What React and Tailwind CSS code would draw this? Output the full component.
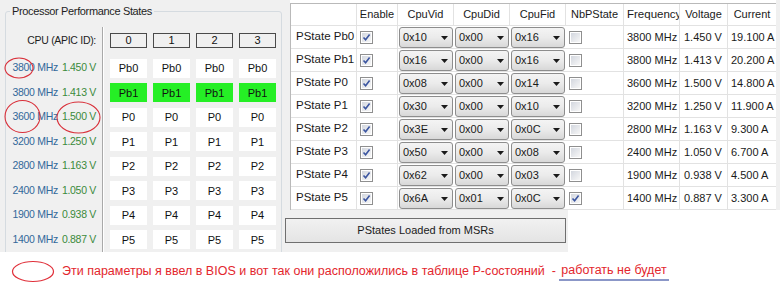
import React from "react";

const cpuRows = [
  { mhz: "3800", volt: "1.450", name: "Pb0" },
  { mhz: "3800", volt: "1.413", name: "Pb1", active: true },
  { mhz: "3600", volt: "1.500", name: "P0" },
  { mhz: "3200", volt: "1.250", name: "P1" },
  { mhz: "2800", volt: "1.163", name: "P2" },
  { mhz: "2400", volt: "1.050", name: "P3" },
  { mhz: "1900", volt: "0.938", name: "P4" },
  { mhz: "1400", volt: "0.887", name: "P5" },
];

const pstates = [
  { name: "PState Pb0", vid: "0x10", did: "0x00", fid: "0x16", nb: false, freq: "3800 MHz", volt: "1.450 V", cur: "19.100 A" },
  { name: "PState Pb1", vid: "0x16", did: "0x00", fid: "0x16", nb: false, freq: "3800 MHz", volt: "1.413 V", cur: "20.200 A" },
  { name: "PState P0", vid: "0x08", did: "0x00", fid: "0x14", nb: false, freq: "3600 MHz", volt: "1.500 V", cur: "14.800 A" },
  { name: "PState P1", vid: "0x30", did: "0x00", fid: "0x10", nb: false, freq: "3200 MHz", volt: "1.250 V", cur: "11.900 A" },
  { name: "PState P2", vid: "0x3E", did: "0x00", fid: "0x0C", nb: false, freq: "2800 MHz", volt: "1.163 V", cur: "9.300 A" },
  { name: "PState P3", vid: "0x50", did: "0x00", fid: "0x08", nb: false, freq: "2400 MHz", volt: "1.050 V", cur: "6.700 A" },
  { name: "PState P4", vid: "0x62", did: "0x00", fid: "0x03", nb: false, freq: "1900 MHz", volt: "0.938 V", cur: "4.500 A" },
  { name: "PState P5", vid: "0x6A", did: "0x01", fid: "0x0C", nb: true, freq: "1400 MHz", volt: "0.887 V", cur: "3.300 A" },
];

const cores = ["0", "1", "2", "3"];

function CheckBox({ checked }) {
  return (
    <span className="flex h-[13px] w-[13px] items-center justify-center border border-[#8f8f8f] bg-white">
      <span className="flex h-[9px] w-[9px] items-center justify-center bg-linear-to-br from-[#d3d7df] to-[#f7f7f7]">
        {checked && (
          <svg width="9" height="9" viewBox="0 0 9 9">
            <path d="M1.5 4.5 L3.6 6.8 L7.6 1.6" fill="none" stroke="#3b55a0" strokeWidth="1.6" />
          </svg>
        )}
      </span>
    </span>
  );
}

function Combo({ value }) {
  return (
    <div className="flex h-[21px] items-center justify-between rounded-[3px] border border-[#8d8d8d] bg-linear-to-b from-[#f4f4f4] via-[#ebebeb] to-[#d8d8d8] pl-[3px] pr-[4px]">
      <span>{value}</span>
      <svg width="7" height="4" viewBox="0 0 7 4">
        <path d="M0 0h7L3.5 4z" fill="#1a1a1a" />
      </svg>
    </div>
  );
}

function LeftPanel() {
  return (
    <div className="h-[252px] w-[283px] shrink-0 overflow-hidden bg-[#f0f0f0] pl-[5px] pt-[4px]">
      <fieldset className="h-[270px] w-[277px] rounded-[3px] border border-[#d5dbe0]">
        <legend className="ml-[4px] px-[2px] text-[11px] leading-[14px] tracking-[-0.35px] text-[#1e1e1e]">
          Processor Performance States
        </legend>
        <div className="mt-[9px] flex">
          <div className="w-[97px] border-r border-[#a9a9a9] pr-[6px] text-right text-[10.5px] tracking-[-0.3px]">
            <div className="flex h-[29px] items-start justify-end pt-[6px]">
              <span className="leading-[15px] text-[#1e1e1e]">CPU (APIC ID):</span>
            </div>
            {cpuRows.map((r, i) => (
              <div key={i} className="flex h-[24.5px] items-center justify-end whitespace-nowrap">
                <span className="text-[#33699a]">{r.mhz} MHz</span>
                <span className="ml-[4px] text-[#3b8a3b]">{r.volt} V</span>
              </div>
            ))}
          </div>
          <div className="border-l border-white pl-[6px] text-[11px] text-[#111]">
            <div className="flex h-[29px] gap-[6px] pt-[6px]">
              {cores.map((c) => (
                <div key={c} className="flex h-[15px] w-[37px] items-center justify-center border border-[#4a4a4a] bg-[#f0f0f0] leading-none">
                  {c}
                </div>
              ))}
            </div>
            {cpuRows.map((r, i) => (
              <div key={i} className="flex h-[24.5px] items-center gap-[6px]">
                {cores.map((c) => (
                  <div
                    key={c}
                    className={`flex h-[19px] w-[37px] items-center justify-center ${
                      r.active ? "bg-[#25ef25]" : "bg-white"
                    }`}
                  >
                    {r.name}
                  </div>
                ))}
              </div>
            ))}
          </div>
        </div>
      </fieldset>
    </div>
  );
}

function PStateTable() {
  const cols = "grid grid-cols-[66px_41px_56px_56px_56px_58px_56px_48px_49px]";
  const cell = "flex items-center overflow-hidden whitespace-nowrap border-r border-b border-[#e2e2e2]";
  return (
    <div className="w-[486px] border-l border-t border-[#b9b9b9] bg-white text-[11px] text-[#1a1a1a]">
      <div className={`${cols} h-[22px]`}>
        <div className={cell}></div>
        <div className={`${cell} justify-center`}>Enable</div>
        <div className={`${cell} justify-center`}>CpuVid</div>
        <div className={`${cell} justify-center`}>CpuDid</div>
        <div className={`${cell} justify-center`}>CpuFid</div>
        <div className={`${cell} justify-center`}>NbPState</div>
        <div className={`${cell} pl-[3px] text-[11.5px]`}>Frequency</div>
        <div className={`${cell} justify-center`}>Voltage</div>
        <div className={`${cell} justify-center`}>Current</div>
      </div>
      {pstates.map((p) => (
        <div key={p.name} className={`${cols} h-[23px]`}>
          <div className={`${cell} pl-[5px] text-[11.5px]`}>{p.name}</div>
          <div className={`${cell} pl-[3px]`}>
            <CheckBox checked />
          </div>
          <div className="border-b border-[#e2e2e2] px-[1px] pt-[1px]">
            <Combo value={p.vid} />
          </div>
          <div className="border-b border-[#e2e2e2] px-[1px] pt-[1px]">
            <Combo value={p.did} />
          </div>
          <div className="border-b border-[#e2e2e2] px-[1px] pt-[1px]">
            <Combo value={p.fid} />
          </div>
          <div className={`${cell} pl-[3px]`}>
            <CheckBox checked={p.nb} />
          </div>
          <div className={`${cell} pl-[3px]`}>{p.freq}</div>
          <div className={`${cell} pl-[4px]`}>{p.volt}</div>
          <div className={`${cell} pl-[3px]`}>{p.cur}</div>
        </div>
      ))}
    </div>
  );
}

export default function App() {
  return (
    <div className="relative h-[290px] w-[780px] overflow-hidden bg-white font-['Liberation_Sans',Arial,sans-serif]">
      <div className="flex h-[252px]">
        <LeftPanel />
        <div className="flex flex-1 flex-col">
          <div className="flex">
            <div className="w-[7px] bg-[#f0f0f0]"></div>
            <div className="pt-[3px]">
              <PStateTable />
            </div>
            <div className="flex-1 bg-[#f0f0f0]"></div>
          </div>
          <div className="flex flex-1">
            <div className="w-[285px] bg-[#f0f0f0] pl-[2px] pt-[8px]">
              <button className="flex h-[25px] w-[281px] items-center justify-center border border-[#6f6f6f] bg-linear-to-b from-[#f1f1f1] to-[#e4e4e4] text-[11px] text-[#1a1a1a]">
                PStates Loaded from MSRs
              </button>
            </div>
          </div>
        </div>
      </div>
      <div className="flex h-[38px] items-center pl-[11px] text-[12.5px] text-[#e3262d]">
        <svg width="44" height="23" viewBox="0 0 44 23" className="shrink-0">
          <ellipse cx="22" cy="11.5" rx="20.5" ry="10" fill="none" stroke="#e0303a" strokeWidth="1.2" />
        </svg>
        <span className="ml-[7px] whitespace-pre">
          Эти параметры я ввел в BIOS и вот так они расположились в таблице Р-состояний  -{" "}
        </span>
        <span className="border-b-2 border-[#8b97c8] px-[2px] leading-[17px]">работать не будет</span>
      </div>
      <svg className="pointer-events-none absolute left-0 top-0" width="120" height="140" viewBox="0 0 120 140">
        <ellipse cx="19" cy="68" rx="14" ry="10" fill="none" stroke="#d9303a" strokeWidth="1.1" />
        <ellipse cx="22.5" cy="116.5" rx="17.5" ry="16" fill="none" stroke="#d9303a" strokeWidth="1.1" />
        <ellipse cx="78.5" cy="117.5" rx="21.5" ry="15.5" fill="none" stroke="#d9303a" strokeWidth="1.1" />
      </svg>
    </div>
  );
}
